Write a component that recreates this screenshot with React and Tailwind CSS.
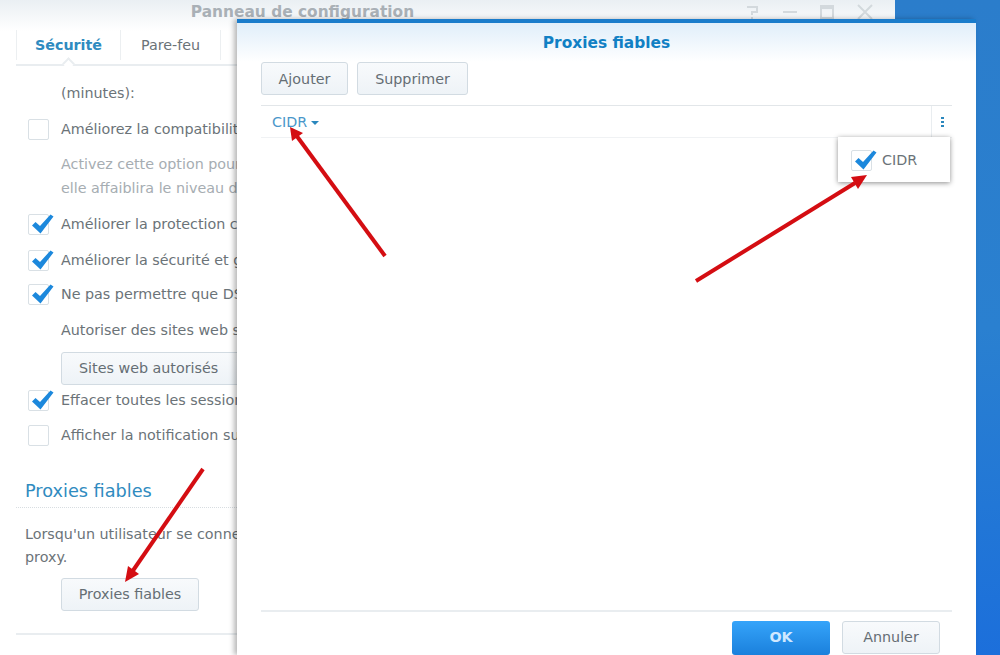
function CheckBox({ checked }) {
  return (
    <span className="relative block h-[21px] w-[21px] shrink-0 rounded-[2px] border border-[#d9e0e5] bg-white">
      {checked && (
        <svg viewBox="0 0 24 24" className="absolute left-[1px] top-[-3px] h-[24px] w-[24px]">
          <path d="M2 13.5 L5.5 10 L10 14 L20.5 2.5 L23.5 4.5 L10.5 21.5 Z" fill="#1c88dc" />
        </svg>
      )}
    </span>
  )
}

function GreyButton({ children, className }) {
  return (
    <button className={`flex items-center justify-center rounded-[3px] border border-[#d2dbe2] bg-gradient-to-b from-[#f8fafc] to-[#eef3f7] text-[14.3px] text-[#656e74] ${className}`}>
      {children}
    </button>
  )
}

function OptionRow({ checked, children, className }) {
  return (
    <div className={`flex h-[21px] items-center gap-[12px] ${className}`}>
      <CheckBox checked={checked} />
      <span className="whitespace-nowrap text-[14.3px] text-[#6b7378]">{children}</span>
    </div>
  )
}

function BackWindow() {
  return (
    <div className="h-[655px] w-[895px] overflow-hidden bg-white">
      <div className="h-[31px] bg-gradient-to-b from-[#eaeff3] to-white">
        <div className="flex h-[24px] items-center">
          <div className="w-[605px] pt-[1px] text-center text-[15.4px] font-bold text-[#a9b0b6]">Panneau de configuration</div>
          <div className="ml-[141px] flex items-center gap-[23px] text-[#d3d9dd]">
            <svg viewBox="0 0 14 16" className="h-[16px] w-[14px]" fill="none" stroke="currentColor" strokeWidth="2">
              <path d="M1 3 H11 V8 H6 V11" />
              <path d="M6 13 V15" />
            </svg>
            <span className="block h-[2px] w-[14px] bg-current" />
            <span className="block h-[14px] w-[14px] border-2 border-t-4 border-current" />
            <svg viewBox="0 0 16 16" className="h-[16px] w-[16px]" stroke="currentColor" strokeWidth="2">
              <path d="M1 1 L15 15 M15 1 L1 15" />
            </svg>
          </div>
        </div>
      </div>

      <div className="relative mx-[16px] -mt-[1px] flex h-[36px] border-b-2 border-[#e9edf0] text-[14.3px]">
        <div className="flex h-[30px] w-[105px] items-center justify-center border-x border-[#eceff1] pt-[1px] font-bold text-[#2f8bc0]">Sécurité</div>
        <div className="flex h-[30px] w-[100px] items-center justify-center border-r border-[#eceff1] pt-[1px] text-[#6b7378]">Pare-feu</div>
        <span className="absolute left-[48px] top-[29px] h-[9px] w-[9px] rotate-45 border-l-2 border-t-2 border-[#e9edf0] bg-white" />
      </div>

      <div className="pl-[28px] pt-[18px]">
        <div className="flex h-[20px] items-center pl-[33px] text-[14.3px] text-[#6b7378]">(minutes):</div>
        <OptionRow className="mt-[15px]">Améliorez la compatibilité</OptionRow>
        <div className="mt-[12px] pl-[33px] text-[14.3px] leading-[24px] text-[#a6adb2]">
          <div className="h-[24px] whitespace-nowrap">Activez cette option pour</div>
          <div className="h-[24px] whitespace-nowrap">elle affaiblira le niveau de</div>
        </div>
        <OptionRow checked className="mt-[14px]">Améliorer la protection contre</OptionRow>
        <OptionRow checked className="mt-[15px]">Améliorer la sécurité et gérer</OptionRow>
        <OptionRow checked className="mt-[13px]">Ne pas permettre que DSM</OptionRow>
        <div className="mt-[16px] flex h-[20px] items-center whitespace-nowrap pl-[33px] text-[14.3px] text-[#6b7378]">Autoriser des sites web sur</div>
        <div className="mt-[11px] pl-[33px]">
          <GreyButton className="h-[33px] w-[190px] justify-start pl-[17px]">Sites web autorisés</GreyButton>
        </div>
        <OptionRow checked className="mt-[5px]">Effacer toutes les sessions</OptionRow>
        <OptionRow className="mt-[14px]">Afficher la notification sur</OptionRow>
      </div>

      <div className="mx-[16px] mt-[33px] flex h-[29px] items-start border-b border-dotted border-[#d8dde1] pl-[9px] text-[17.7px] leading-[24px] text-[#2f8bc0]">
        Proxies fiables
      </div>
      <div className="mt-[15px] pl-[25px] text-[14.3px] leading-[23px] text-[#6b7378]">
        <div className="h-[23px] whitespace-nowrap">Lorsqu'un utilisateur se connecte</div>
        <div className="h-[23px]">proxy.</div>
      </div>
      <div className="mt-[9px] pl-[61px]">
        <GreyButton className="h-[33px] w-[138px]">Proxies fiables</GreyButton>
      </div>
      <div className="mx-[16px] mt-[22px] h-[2px] bg-[#e9edf0]" />
    </div>
  )
}

function Dialog() {
  return (
    <div className="absolute bottom-0 left-[237px] top-[19px] flex w-[739px] flex-col border-t-4 border-[#1a7ccb] bg-white shadow-[-3px_0_5px_rgba(0,0,0,0.28)]">
      <div className="h-[39px] bg-gradient-to-b from-[#e0eefa] to-white pt-[9px] text-center text-[15.4px] font-bold text-[#1180c4]">
        Proxies fiables
      </div>
      <div className="flex gap-[9px] px-[24px]">
        <GreyButton className="h-[33px] w-[87px] pt-[2px]">Ajouter</GreyButton>
        <GreyButton className="h-[33px] w-[111px] pt-[2px]">Supprimer</GreyButton>
      </div>
      <div className="relative mx-[24px] mt-[10px] flex h-[33px] items-center border-y border-[#e2e6e9] border-b-[#f0f2f4] pl-[11px] pt-[2px] text-[14.3px] text-[#4a97ca]">
        CIDR
        <span className="ml-[4px] mt-[1px] h-0 w-0 border-x-[4px] border-t-[4px] border-x-transparent border-t-[#2a87bd]" />
        <div className="absolute bottom-0 right-[20px] top-0 border-l border-[#e9edf0]" />
        <div className="absolute right-[8px] top-[11px] flex flex-col gap-[2px]">
          <span className="block h-[2px] w-[3px] bg-[#2a87bd]" />
          <span className="block h-[2px] w-[3px] bg-[#2a87bd]" />
          <span className="block h-[2px] w-[3px] bg-[#2a87bd]" />
        </div>
        <div className="absolute right-[2px] top-[31px] flex h-[45px] w-[112px] items-center gap-[10px] bg-white pl-[13px] pt-[2px] text-[#6b7378] shadow-[0_1px_5px_rgba(0,0,0,0.45)]">
          <CheckBox checked />
          CIDR
        </div>
      </div>
      <div className="flex-1" />
      <div className="mx-[24px] flex h-[45px] justify-end gap-[12px] border-t-2 border-[#e9edf0] pr-[12px] pt-[9px]">
        <button className="h-[34px] w-[98px] rounded-[3px] bg-gradient-to-b from-[#35a4fa] to-[#1a80dc] text-[14.3px] font-bold text-[#cfe8ff]">OK</button>
        <GreyButton className="h-[33px] w-[98px]">Annuler</GreyButton>
      </div>
    </div>
  )
}

function Arrows() {
  return (
    <svg viewBox="0 0 1000 655" className="pointer-events-none absolute left-0 top-0 h-[655px] w-[1000px]">
      <g stroke="#d40d12" strokeWidth="4" fill="#d40d12">
        <path d="M385 256 L296 135" />
        <path d="M696 281 L855 183" />
        <path d="M203 469 L132 572" />
      </g>
      <g fill="#d40d12">
        <path d="M290 127 L303 133 L292 141 Z" />
        <path d="M867 175 L851 177 L858 189 Z" />
        <path d="M125 582 L128 566 L139 574 Z" />
      </g>
    </svg>
  )
}

export default function App() {
  return (
    <div className="relative h-[655px] w-[1000px] overflow-hidden bg-gradient-to-b from-[#2b7dcb] via-[#2a80d0] to-[#1c6fdb] font-['DejaVu_Sans',sans-serif]">
      <BackWindow />
      <Dialog />
      <Arrows />
    </div>
  )
}
